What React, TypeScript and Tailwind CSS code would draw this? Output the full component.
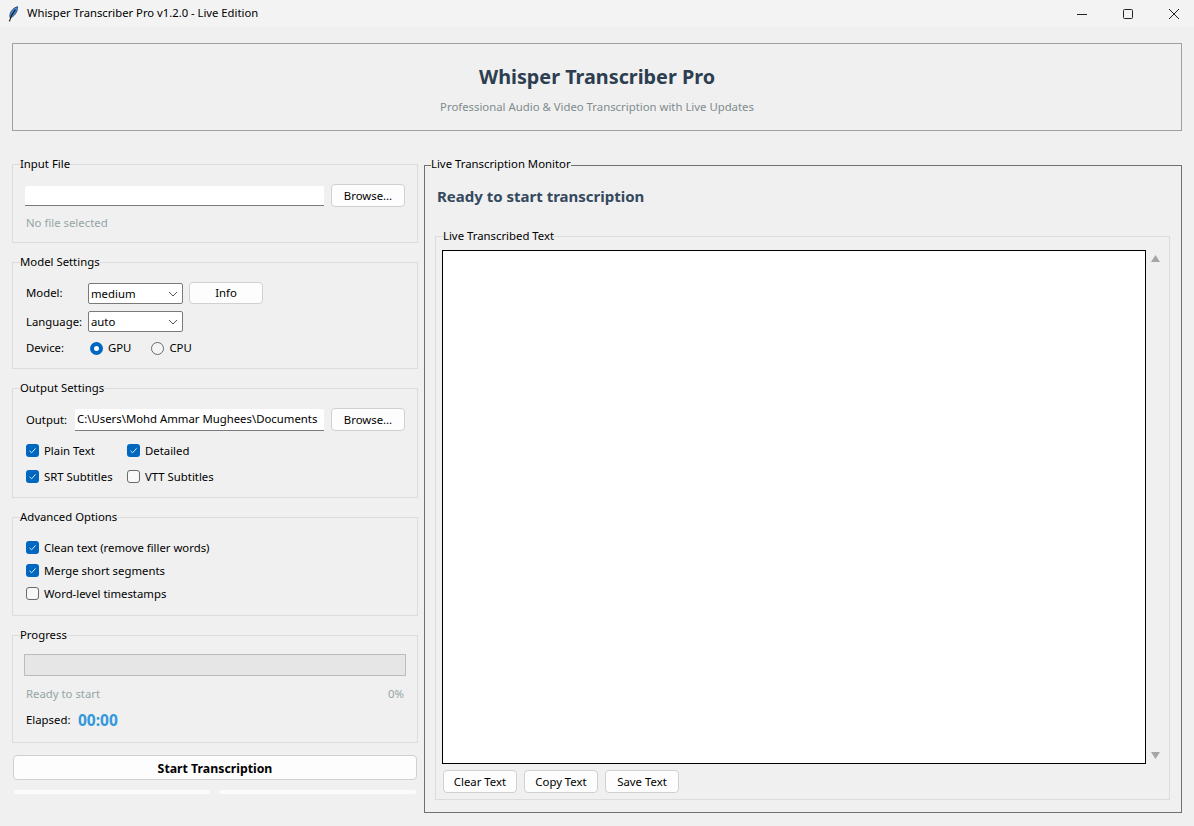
import React from "react";

const font = { fontFamily: '"Noto Sans", "Open Sans", sans-serif' };

function Group({ label, className, children }: { label: string; className: string; children: React.ReactNode }) {
  return (
    <div className={`relative border border-[#dcdcdc] ${className}`}>
      <span className="absolute left-[7px] top-[-10px] bg-[#f0f0f0] leading-[18px] text-black">{label}</span>
      {children}
    </div>
  );
}

function Btn({ children, className }: { children: React.ReactNode; className: string }) {
  return (
    <button className={`flex items-center justify-center rounded-[4px] border border-[#d0d0d0] bg-[#fdfdfd] text-black ${className}`}>
      {children}
    </button>
  );
}

function Check({ on, label, className = "" }: { on?: boolean; label: string; className?: string }) {
  return (
    <div className={`flex h-[13px] items-center ${className}`}>
      {on ? (
        <span className="flex h-[13px] w-[13px] items-center justify-center rounded-[3px] bg-[#0067c0]">
          <svg width="9" height="9" viewBox="0 0 9 9" fill="none">
            <path d="M1.5 4.8 L3.6 6.8 L7.5 2.4" stroke="#dcebf8" strokeWidth="1" />
          </svg>
        </span>
      ) : (
        <span className="h-[13px] w-[13px] rounded-[3px] border border-[#6a6a6a] bg-[#f8f8f8]" />
      )}
      <span className="ml-[5px] leading-[16px]">{label}</span>
    </div>
  );
}

function Select({ value }: { value: string }) {
  return (
    <div className="flex h-[21px] w-[95px] items-center justify-between rounded-[2px] border border-[#7a7a7a] bg-white pl-[2px] pr-[4px]">
      <span>{value}</span>
      <svg width="10" height="6" viewBox="0 0 10 6" fill="none">
        <path d="M1 1 L5 5 L9 1" stroke="#555" strokeWidth="1" />
      </svg>
    </div>
  );
}

function Radio({ on, label, className = "" }: { on?: boolean; label: string; className?: string }) {
  return (
    <div className={`flex items-center ${className}`}>
      {on ? (
        <span className="h-[13px] w-[13px] rounded-full border-[4px] border-[#0067c0] bg-white" />
      ) : (
        <span className="h-[13px] w-[13px] rounded-full border border-[#6a6a6a] bg-[#f5f5f5]" />
      )}
      <span className="ml-[5px]">{label}</span>
    </div>
  );
}

export default function App() {
  return (
    <div style={font} className="flex h-[826px] w-[1194px] flex-col overflow-hidden bg-[#f0f0f0] text-[11.35px] leading-[16px] text-black">
      <div className="flex h-[27px] shrink-0 items-center bg-[#f3f3f3]">
        <svg className="ml-[8px]" width="11" height="16" viewBox="0 0 11 16" fill="none">
          <path d="M9.6 0.6 C6 1.6 2.8 4.6 2 8.2 C1.7 9.8 1.8 11 2.2 11.8 C5.4 10.8 8 8 9 4.8 C9.4 3.2 9.6 1.8 9.6 0.6 Z" fill="#4a8ad8" stroke="#1c3e70" strokeWidth="0.8" />
          <path d="M7.4 3.6 C5 6.6 2.6 10.6 1.4 15.4" stroke="#111" strokeWidth="1.1" />
        </svg>
        <span className="mb-[2px] ml-[8px] text-[11.25px] text-black">Whisper Transcriber Pro v1.2.0 - Live Edition</span>
        <div className="ml-auto flex items-center">
          <svg width="12" height="12" viewBox="0 0 12 12" className="mr-[34px]"><path d="M1 6.5 H11" stroke="#222" strokeWidth="1" /></svg>
          <svg width="12" height="12" viewBox="0 0 12 12" className="mr-[34px]"><rect x="1.5" y="1.5" width="9" height="9" rx="1" fill="none" stroke="#222" strokeWidth="1" /></svg>
          <svg width="12" height="12" viewBox="0 0 12 12" className="mr-[14px]"><path d="M1 1 L11 11 M11 1 L1 11" stroke="#222" strokeWidth="1" /></svg>
        </div>
      </div>

      <div className="flex flex-col px-[12px] pt-[16px]">
        <div className="flex h-[88px] w-[1170px] flex-col items-center border border-[#a0a0a0]">
          <div className="mt-[19px] text-[19.8px] font-bold leading-[28px] text-[#2c3e50]">Whisper Transcriber Pro</div>
          <div className="mt-[8px] leading-[16px] text-[#7f8c8d]">Professional Audio &amp; Video Transcription with Live Updates</div>
        </div>

        <div className="mt-[33px] flex">
          <div className="flex w-[406px] flex-col">
            <Group label="Input File" className="h-[79px]">
              <div className="mt-[19px] flex items-center pl-[12px]">
                <div className="h-[20px] w-[299px] rounded-t-[2px] border-b border-[#7a7a7a] bg-white" />
                <Btn className="ml-[7px] h-[23px] w-[74px]">Browse...</Btn>
              </div>
              <div className="ml-[13px] mt-[8px] text-[#95a5a6]">No file selected</div>
            </Group>

            <Group label="Model Settings" className="mt-[19px] h-[107px]">
              <div className="mt-[19px] flex items-start pl-[13px]">
                <span className="mt-[3px] w-[62px]">Model:</span>
                <div className="mt-[1px]"><Select value="medium" /></div>
                <Btn className="ml-[6px] h-[22px] w-[74px]">Info</Btn>
              </div>
              <div className="mt-[7px] flex items-center pl-[13px]">
                <span className="w-[62px]">Language:</span>
                <Select value="auto" />
              </div>
              <div className="mt-[8px] flex items-center pl-[13px]">
                <span className="w-[64px]">Device:</span>
                <Radio on label="GPU" />
                <Radio label="CPU" className="ml-[20px]" />
              </div>
            </Group>

            <Group label="Output Settings" className="mt-[19px] h-[110px]">
              <div className="mt-[19px] flex items-center pl-[13px]">
                <span className="w-[49px]">Output:</span>
                <div className="flex h-[22px] w-[249px] items-center overflow-hidden rounded-t-[2px] border-b border-[#7a7a7a] bg-white pl-[2px] whitespace-nowrap">
                  C:\Users\Mohd Ammar Mughees\Documents
                </div>
                <Btn className="ml-[7px] h-[23px] w-[74px]">Browse...</Btn>
              </div>
              <div className="mt-[13px] flex pl-[13px]">
                <Check on label="Plain Text" className="w-[101px]" />
                <Check on label="Detailed" />
              </div>
              <div className="mt-[13px] flex pl-[13px]">
                <Check on label="SRT Subtitles" className="w-[101px]" />
                <Check label="VTT Subtitles" />
              </div>
            </Group>

            <Group label="Advanced Options" className="mt-[19px] h-[99px]">
              <div className="mt-[23px] flex flex-col gap-[10px] pl-[13px]">
                <Check on label="Clean text (remove filler words)" />
                <Check on label="Merge short segments" />
                <Check label="Word-level timestamps" />
              </div>
            </Group>

            <Group label="Progress" className="mt-[19px] h-[108px]">
              <div className="ml-[11px] mt-[18px] h-[22px] w-[382px] border border-[#bcbcbc] bg-[#e6e6e6]" />
              <div className="mt-[10px] flex justify-between pl-[13px] pr-[13px] text-[#95a5a6]">
                <span>Ready to start</span>
                <span>0%</span>
              </div>
              <div className="mt-[7px] flex items-center pl-[13px]">
                <span className="w-[52px]">Elapsed:</span>
                <span className="text-[15.5px] font-bold leading-[22px] text-[#3498db]">00:00</span>
              </div>
            </Group>

            <button className="ml-[1px] mt-[12px] h-[25px] w-[404px] rounded-[4px] border border-[#d0d0d0] bg-[#fdfdfd] pt-[2px] text-[12.3px] font-bold text-black">
              Start Transcription
            </button>
            <div className="ml-[1.5px] mt-[10px] flex gap-[9px]">
              <div className="h-[4px] w-[196px] rounded-[3px] bg-[#fbfbfb]" />
              <div className="h-[4px] w-[197px] rounded-[3px] bg-[#fbfbfb]" />
            </div>
          </div>

          <div className="relative ml-[6px] mt-[1px] h-[648px] w-[758px] border border-[#707070]">
            <span className="absolute left-[6px] top-[-11px] bg-[#f0f0f0] leading-[18px]">Live Transcription Monitor</span>
            <div className="ml-[12px] mt-[19px] text-[15px] font-bold leading-[22px] text-[#34495e]">Ready to start transcription</div>
            <div className="relative ml-[10px] mt-[29px] h-[564px] w-[735px] border border-[#dcdcdc]">
              <span className="absolute left-[7px] top-[-10px] bg-[#f0f0f0] leading-[18px]">Live Transcribed Text</span>
              <div className="flex pl-[6px] pt-[13px]">
                <div className="h-[514px] w-[704px] border-[1.5px] border-black bg-white" />
                <div className="ml-[4px] flex h-[514px] w-[10px] flex-col items-center justify-between py-[5px]">
                  <svg width="9" height="7" viewBox="0 0 9 7"><path d="M4.5 0 L9 7 H0 Z" fill="#a6a6a6" /></svg>
                  <svg width="9" height="7" viewBox="0 0 9 7"><path d="M0 0 H9 L4.5 7 Z" fill="#a6a6a6" /></svg>
                </div>
              </div>
              <div className="ml-[7px] mt-[6px] flex gap-[7px]">
                <Btn className="h-[23px] w-[74px]">Clear Text</Btn>
                <Btn className="h-[23px] w-[74px]">Copy Text</Btn>
                <Btn className="h-[23px] w-[74px]">Save Text</Btn>
              </div>
            </div>
          </div>
        </div>
      </div>
    </div>
  );
}
